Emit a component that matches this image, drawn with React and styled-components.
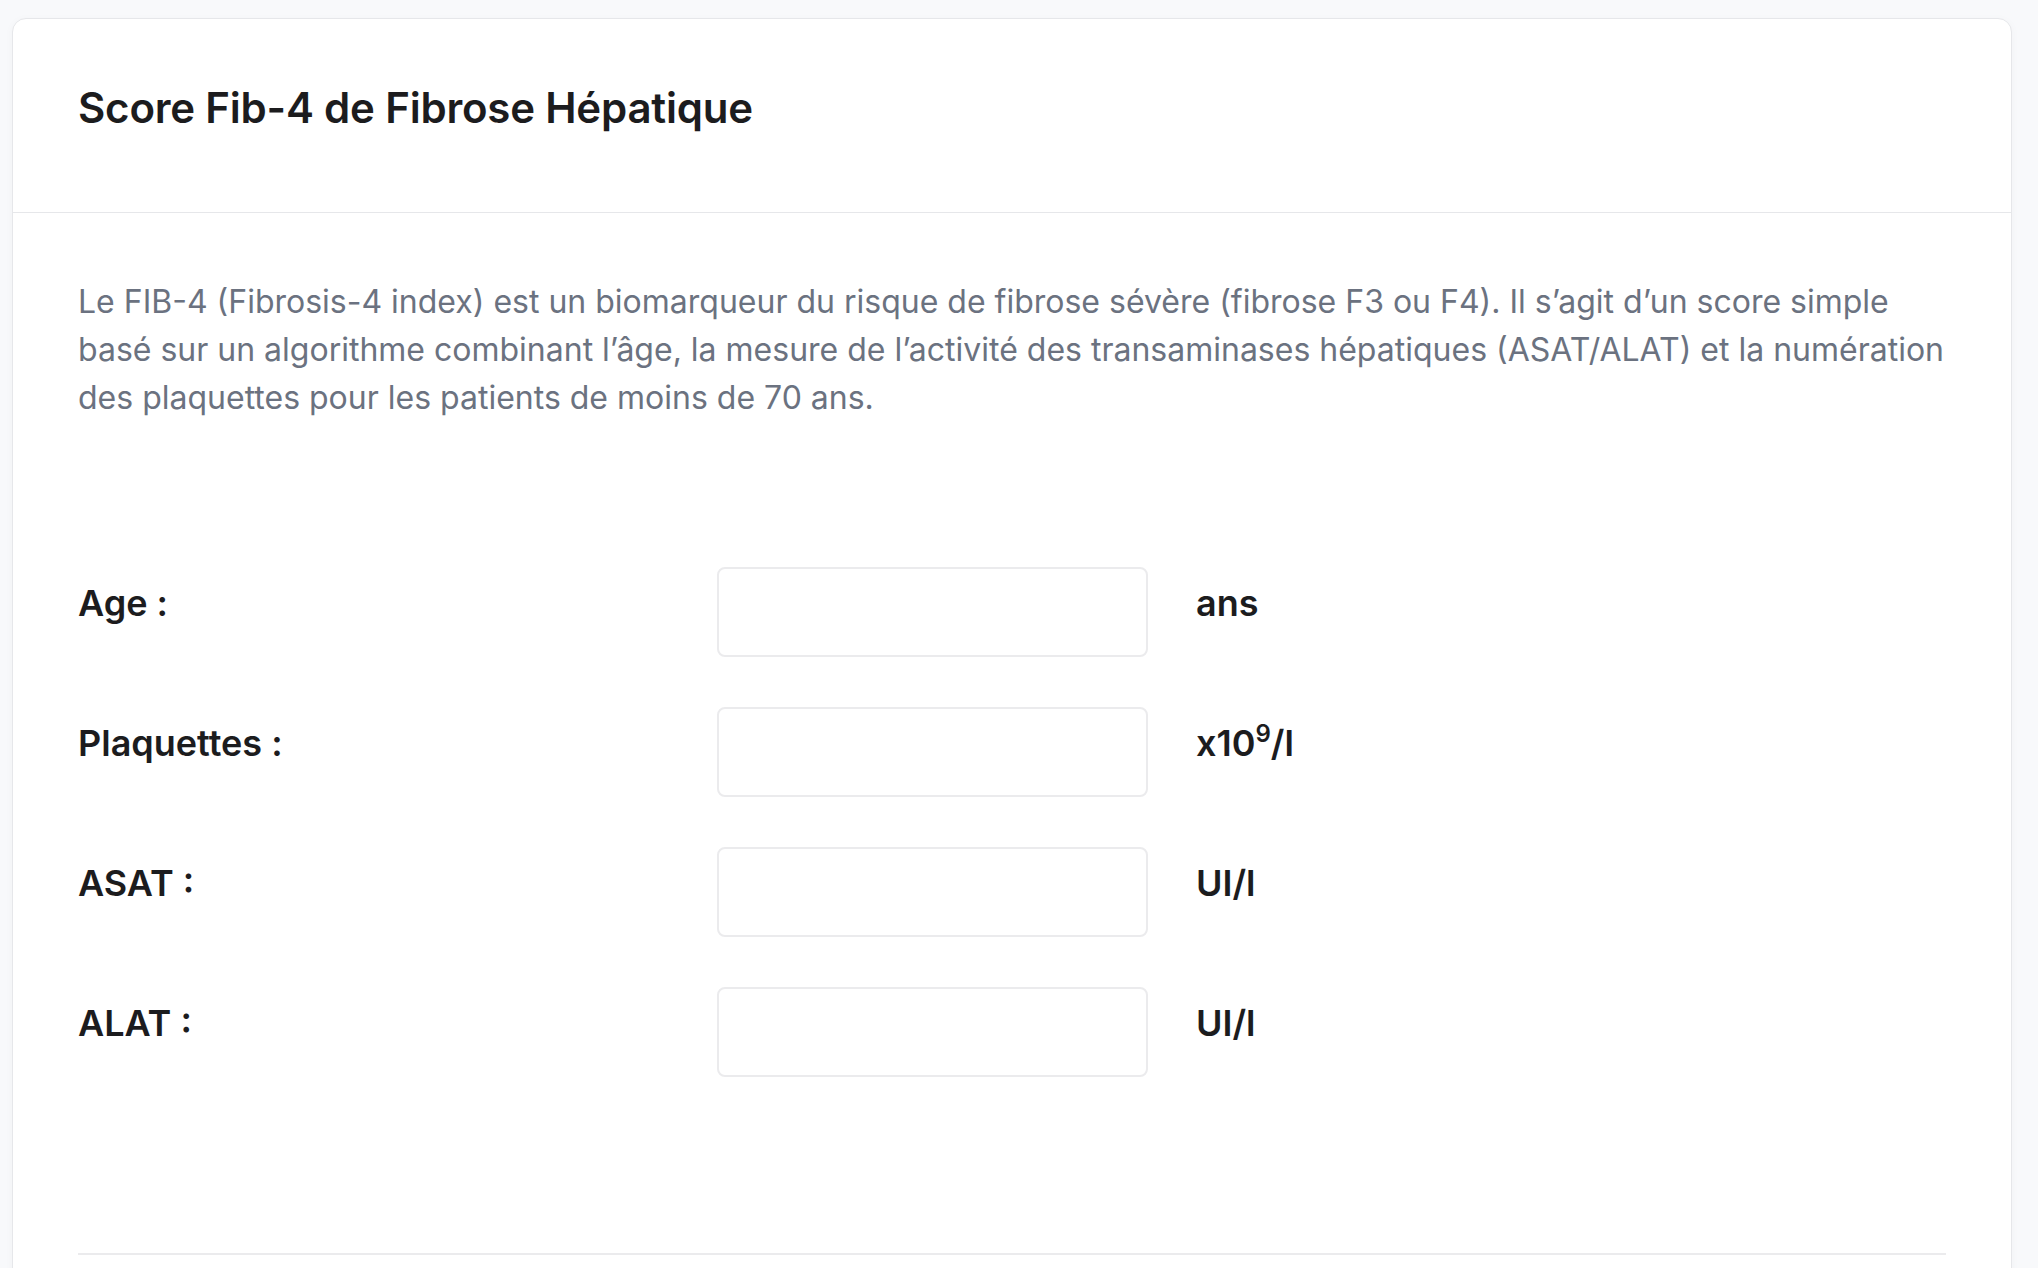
import React from "react";
import styled, { createGlobalStyle } from "styled-components";

const GlobalStyle = createGlobalStyle`
  html, body {
    margin: 0;
    padding: 0;
    background: #f8f9fb;
    font-family: Inter, "Noto Sans", sans-serif;
  }
`;

const fields = [
  { id: "age", label: "Age :", unit: "ans" },
  { id: "plaquettes", label: "Plaquettes :", unit: <>x10<sup>9</sup>/l</> },
  { id: "asat", label: "ASAT :", unit: "UI/l" },
  { id: "alat", label: "ALAT :", unit: "UI/l" },
];

export default function App() {
  return (
    <>
      <GlobalStyle />
      <Page>
        <Card>
          <CardHeader>
            <Title>Score Fib-4 de Fibrose Hépatique</Title>
          </CardHeader>
          <CardBody>
            <Description>
              Le FIB-4 (Fibrosis-4 index) est un biomarqueur du risque de fibrose sévère (fibrose F3 ou F4). Il s’agit d’un score simple
              basé sur un algorithme combinant l’âge, la mesure de l’activité des transaminases hépatiques (ASAT/ALAT) et la numération
              des plaquettes pour les patients de moins de 70 ans.
            </Description>
            <Form>
              {fields.map((f) => (
                <FieldRow key={f.id}>
                  <Label htmlFor={f.id}>{f.label}</Label>
                  <Input id={f.id} type="text" />
                  <Unit>{f.unit}</Unit>
                </FieldRow>
              ))}
            </Form>
            <Divider />
          </CardBody>
        </Card>
      </Page>
    </>
  );
}

const Page = styled.div`
  padding: 18px 26px 0 12px;
`;

const Card = styled.div`
  background: #ffffff;
  border: 1px solid #e6e7ea;
  border-radius: 14px;
  box-shadow: 0 2px 10px rgba(0, 0, 0, 0.03);
  min-height: 1400px;
`;

const CardHeader = styled.div`
  padding: 64px 65px 79px;
  border-bottom: 1px solid #e6e7ea;
`;

const Title = styled.h1`
  margin: 0;
  font-size: 42px;
  line-height: 50px;
  font-weight: 600;
  color: #1c1c1e;
  letter-spacing: -0.2px;
`;

const CardBody = styled.div`
  padding: 65px 65px 0;
`;

const Description = styled.p`
  margin: 0;
  font-size: 32px;
  line-height: 48px;
  color: #6b7280;
  font-weight: 400;
`;

const Form = styled.div`
  display: flex;
  flex-direction: column;
  gap: 50px;
  margin-top: 145px;
`;

const FieldRow = styled.div`
  display: grid;
  grid-template-columns: 639px 431px auto;
  align-items: start;
`;

const Label = styled.label`
  padding-top: 16px;
  font-size: 36px;
  line-height: 40px;
  font-weight: 600;
  color: #1c1c1e;
`;

const Input = styled.input`
  box-sizing: border-box;
  height: 90px;
  width: 100%;
  margin: 0;
  border: 2px solid #ebebed;
  border-radius: 8px;
  background: #ffffff;
  font-family: inherit;
  font-size: 32px;
  padding: 0 20px;
  outline: none;
`;

const Unit = styled.span`
  padding: 16px 0 0 48px;
  font-size: 36px;
  line-height: 40px;
  font-weight: 600;
  color: #1c1c1e;

  sup {
    font-size: 24px;
    line-height: 0;
    vertical-align: 14px;
  }
`;

const Divider = styled.hr`
  margin: 176px 0 0;
  border: none;
  border-top: 2px solid #ebebed;
`;
